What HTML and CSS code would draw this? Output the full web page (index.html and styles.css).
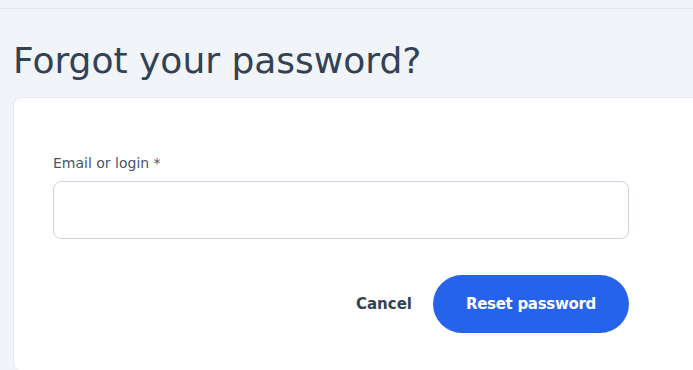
FILE: index.html
```html
<!DOCTYPE html>
<html lang="en">
<head>
<meta charset="utf-8">
<title>Forgot your password?</title>
<link rel="stylesheet" href="styles.css">
</head>
<body>
  <div class="topbar"></div>
  <main class="page">
    <h1 class="title">Forgot your password?</h1>
    <section class="card">
      <form class="form">
        <label class="label" for="login">Email or login *</label>
        <input class="input" id="login" type="text">
        <div class="actions">
          <button type="button" class="btn-cancel">Cancel</button>
          <button type="submit" class="btn-primary">Reset password</button>
        </div>
      </form>
    </section>
  </main>
</body>
</html>
```

FILE: styles.css
```css
html, body {
  margin: 0;
  padding: 0;
  height: 100%;
  overflow: hidden;
}
body {
  background: #f1f5f9;
  font-family: "DejaVu Sans", "Liberation Sans", sans-serif;
  color: #334155;
}
.topbar {
  height: 8px;
  border-bottom: 1px solid #e2e6ea;
}
.page {
  padding-left: 13px;
}
.title {
  margin: 30px 0 0 0;
  font-size: 36px;
  line-height: 44px;
  font-weight: 400;
  color: #334155;
  height: 44px;
  padding-bottom: 14px;
}
.card {
  height: 274px;
  box-sizing: border-box;
  background: #ffffff;
  border: 1px solid #e5eaf0;
  border-right: 0;
  border-radius: 8px 0 0 8px;
  padding: 55px 0 0 39px;
}
.form {
  width: 576px;
  display: flex;
  flex-direction: column;
}
.label {
  font-size: 14px;
  line-height: 20px;
  color: #475569;
  margin-bottom: 8px;
}
.input {
  height: 58px;
  box-sizing: border-box;
  border: 1px solid #cbd5e1;
  border-radius: 8px;
  background: #fff;
  font: inherit;
  padding: 0 16px;
  outline: none;
}
.actions {
  margin-top: 36px;
  display: flex;
  justify-content: flex-end;
  align-items: center;
  gap: 21px;
}
.btn-cancel {
  border: 0;
  background: none;
  padding: 0;
  font-family: inherit;
  font-size: 15px;
  font-weight: 700;
  color: #334155;
  cursor: pointer;
}
.btn-primary {
  width: 196px;
  height: 58px;
  border: 0;
  border-radius: 29px;
  background: #2563eb;
  color: #ffffff;
  font-family: inherit;
  font-size: 15px;
  font-weight: 700;
  letter-spacing: -0.3px;
  cursor: pointer;
}
```
